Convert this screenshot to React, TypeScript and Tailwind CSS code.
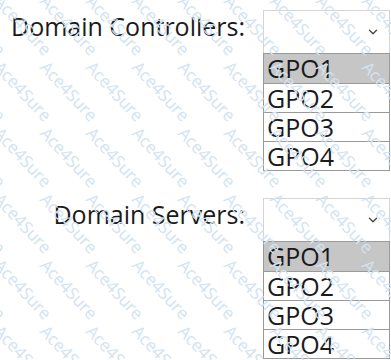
import { ChevronDown } from 'lucide-react';

const options = ['GPO1', 'GPO2', 'GPO3', 'GPO4'];

function Watermark() {
    // faint diagonal "Ace4Sure" stamps over the whole picture
    const marks: { x: number; y: number }[] = [];
    for (let r = -2; r < 7; r++) {
        for (let c = -3; c < 10; c++) {
            marks.push({ x: c * 46 + 4, y: r * 66 - 8 });
        }
    }
    return (
        <div className="pointer-events-none absolute inset-0 overflow-hidden">
            {marks.map((m, i) => (
                <span
                    key={i}
                    className="absolute origin-top-left rotate-[47deg] whitespace-nowrap text-[17px] leading-none font-['Open_Sans',sans-serif] text-[#d3e3f1]"
                    style={{ left: m.x, top: m.y }}
                >
                    Ace4Sure
                </span>
            ))}
        </div>
    );
}

function Dropdown() {
    return (
        <div className="w-[127px]">
            <div className="h-[43px] border border-b-0 border-[#d4d4d4] flex items-center justify-end pr-[9px]">
                <ChevronDown className="w-[14px] h-[14px] text-[#444]" strokeWidth={2.2} />
            </div>
            <div className="border border-[#9a9a9a]">
                {options.map((o, i) => (
                    <div
                        key={o}
                        className={`h-[29px] flex items-center pl-[3px] text-[25px] leading-none text-[#1a1a1a] ${i > 0 ? 'border-t border-[#9a9a9a]' : ''} ${i === 0 ? 'bg-[#c6c6c6]' : 'bg-white'}`}
                    >
                        {o}
                    </div>
                ))}
            </div>
        </div>
    );
}

function Row({ label }: { label: string }) {
    return (
        <div className="flex items-start">
            <div className="w-[245px] text-right text-[25px] leading-none pt-[4px] text-[#1a1a1a]">{label}</div>
            <div className="ml-[18px]">
                <Dropdown />
            </div>
        </div>
    );
}

export default function App() {
    return (
        <div className="relative w-[391px] h-[360px] bg-white overflow-hidden font-['Open_Sans',sans-serif]">
            <div className="flex flex-col gap-[27px] pt-[10px]">
                <Row label="Domain Controllers:" />
                <Row label="Domain Servers:" />
            </div>
            <Watermark />
        </div>
    );
}
